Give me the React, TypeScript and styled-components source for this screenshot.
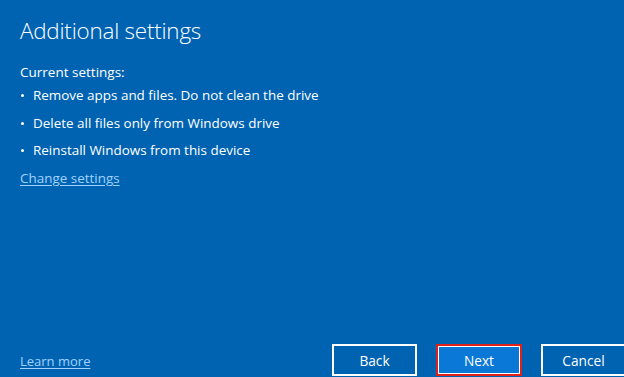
import React from "react";
import styled, { createGlobalStyle } from "styled-components";

const Global = createGlobalStyle`
  html, body { margin: 0; padding: 0; overflow: hidden; background: #0063b1; }
  body { font-family: "Open Sans", "Noto Sans", sans-serif; }
`;

const Dialog = styled.div`
  width: 626px;
  height: 377px;
  background: #0063b1;
  color: #ffffff;
  display: flex;
  flex-direction: column;
  box-sizing: border-box;
  padding: 16px 0 1px 20px;
`;

const Title = styled.h1`
  margin: 0;
  font-weight: 300;
  font-size: 22.4px;
  line-height: 30px;
  letter-spacing: -0.2px;
`;

const Content = styled.div`
  flex: 1;
  display: flex;
  flex-direction: column;
  padding-top: 16px;
`;

const Label = styled.div`
  font-size: 13.5px;
  line-height: 20px;
`;

const List = styled.ul`
  list-style: none;
  margin: 3px 0 0;
  padding: 0;
  display: flex;
  flex-direction: column;
  gap: 7.5px;
`;

const Item = styled.li`
  display: flex;
  align-items: center;
  font-size: 13.45px;
  line-height: 20px;
  &::before {
    content: "";
    width: 3px;
    height: 3px;
    border-radius: 50%;
    background: #fff;
    margin: 1px 9px 0 1px;
  }
`;

const Link = styled.a<{ $small?: boolean }>`
  color: #a0d2ff;
  text-decoration: underline;
  text-underline-offset: 2px;
  font-size: ${(p) => (p.$small ? 13 : 13.45)}px;
  line-height: 20px;
  cursor: pointer;
  align-self: flex-start;
`;

const ChangeLink = styled(Link)`
  margin-top: 8px;
`;

const LearnLink = styled(Link)`
  align-self: flex-end;
  margin-bottom: 5px;
`;

const Footer = styled.div`
  display: flex;
  align-items: flex-end;
`;

const Buttons = styled.div`
  margin-left: auto;
  display: flex;
  gap: 19px;
`;

const Button = styled.button<{ $primary?: boolean }>`
  box-sizing: border-box;
  width: ${(p) => (p.$primary ? 86 : 85)}px;
  height: 32px;
  font-family: "Open Sans", "Noto Sans", sans-serif;
  font-size: 13.7px;
  color: #fff;
  background: ${(p) => (p.$primary ? "#0a78d7" : "#0063b1")};
  border: 2px solid ${(p) => (p.$primary ? "#e0211b" : "#fff")};
  box-shadow: ${(p) => (p.$primary ? "inset 0 0 0 1px #fff" : "none")};
  padding: 0;
  cursor: pointer;
`;

export default function App() {
  return (
    <>
      <Global />
      <Dialog>
        <Title>Additional settings</Title>
        <Content>
          <Label>Current settings:</Label>
          <List>
            <Item>Remove apps and files. Do not clean the drive</Item>
            <Item>Delete all files only from Windows drive</Item>
            <Item>Reinstall Windows from this device</Item>
          </List>
          <ChangeLink>Change settings</ChangeLink>
        </Content>
        <Footer>
          <LearnLink $small>Learn more</LearnLink>
          <Buttons>
            <Button>Back</Button>
            <Button $primary>Next</Button>
            <Button>Cancel</Button>
          </Buttons>
        </Footer>
      </Dialog>
    </>
  );
}
